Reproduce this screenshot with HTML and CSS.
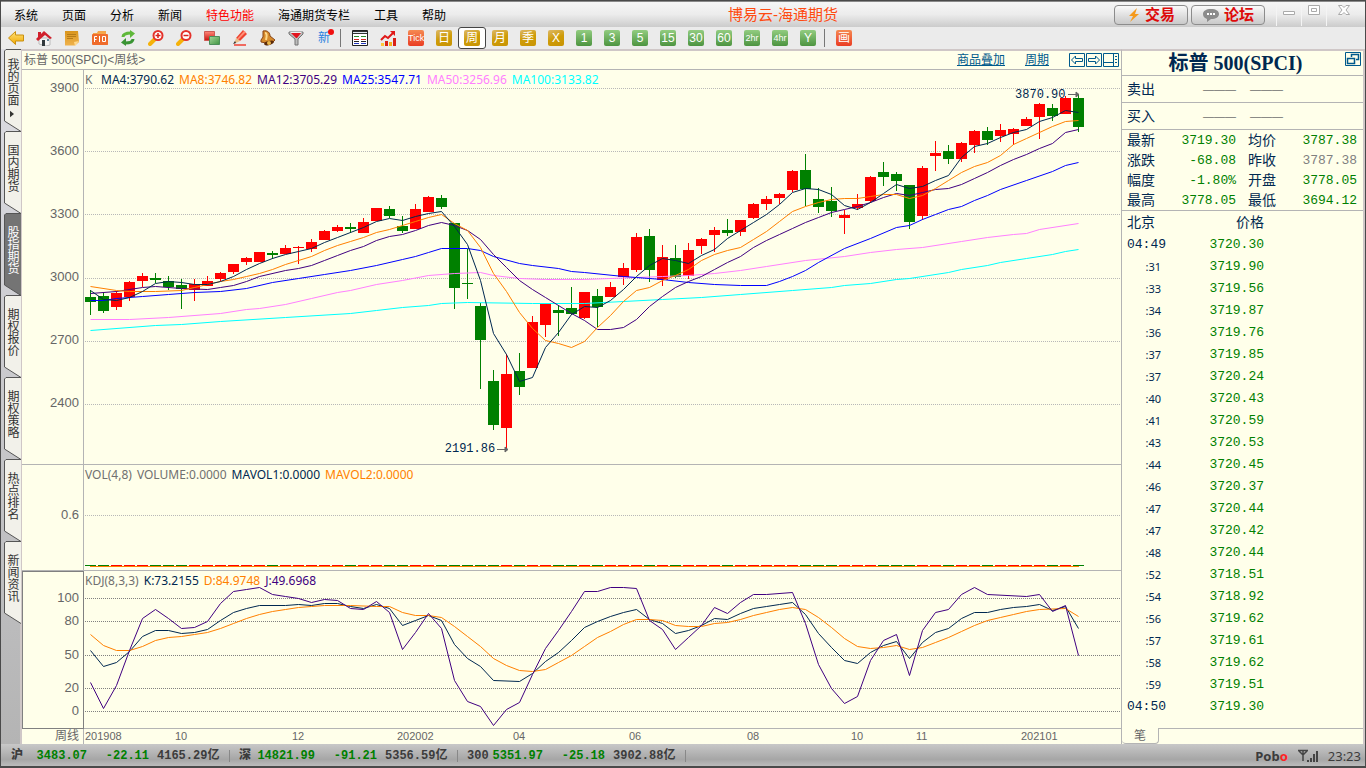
FILE: index.html
```html
<!DOCTYPE html>
<html lang="zh-CN">
<head>
<meta charset="utf-8">
<title>博易云-海通期货</title>
<link rel="stylesheet" href="styles.css">
</head>
<body>
<svg class="defs" aria-hidden="true">
  <defs>
    <linearGradient id="gGold" x1="0" y1="0" x2="0" y2="1"><stop offset="0" stop-color="#ffe27a"/><stop offset="1" stop-color="#f0a800"/></linearGradient>
    <linearGradient id="gNote" x1="0" y1="0" x2="0" y2="1"><stop offset="0" stop-color="#d9951c"/><stop offset="1" stop-color="#efb24c"/></linearGradient>
    <linearGradient id="gRed" x1="0" y1="0" x2="0" y2="1"><stop offset="0" stop-color="#ff8a7a"/><stop offset="1" stop-color="#c9100c"/></linearGradient>
    <linearGradient id="gGreen" x1="0" y1="0" x2="1" y2="1"><stop offset="0" stop-color="#a4d69a"/><stop offset="1" stop-color="#3f9440"/></linearGradient>
  </defs>
</svg>
<div class="window">
  <header class="titlebar">
    <nav class="menu">
      <button>系统</button><button>页面</button><button>分析</button><button>新闻</button><button class="hot">特色功能</button><button>海通期货专栏</button><button>工具</button><button>帮助</button>
    </nav>
    <h1 class="app-title">博易云-海通期货</h1>
    <div class="title-actions">
      <button class="pill"><svg width="14" height="16" viewBox="0 0 14 16"><path d="M10 1 2 9h4l-3 6 9-8H8z" fill="#f59a1c"/></svg>交易</button>
      <button class="pill"><svg width="18" height="16" viewBox="0 0 18 16"><path d="M9 2c5 0 8 2 8 5s-3 5-8 5l-4 3v-3c-3-1-4-3-4-5 0-3 3-5 8-5z" fill="#8c8c8c"/><path d="M5 6h2v2H5zM8 6h2v2H8zM11 6h2v2h-2z" fill="#fff"/></svg>论坛</button>
    </div>
    <div class="win-controls">
      <button aria-label="最小化"><svg width="14" height="12" viewBox="0 0 14 12"><path d="M1.500 7.500h11v3h-11z" fill="#fff" stroke="#aaa"/></svg></button>
      <button aria-label="最大化"><svg width="14" height="12" viewBox="0 0 14 12"><path d="M1.500 1.500h11v9h-11zM4.500 4.500h5v3h-5z" fill="#fff" stroke="#aaa"/></svg></button>
      <button class="close" aria-label="关闭"><svg width="14" height="12" viewBox="0 0 14 12"><path d="M1.500 1.500h3.500l2 2 2-2h3.500L9 6l3.500 4.500H9l-2-2-2 2H1.500L5 6z" fill="#fff" stroke="#aaa"/></svg></button>
    </div>
  </header>

  <div class="toolbar">
    <button class="tool" aria-label="后退"><svg width="16" height="16" viewBox="0 0 16 16"><path d="M.5 8 7.500 1.500V5h8v6h-8v3.500z" fill="url(#gGold)" stroke="#c99010"/></svg></button>
    <button class="tool" aria-label="首页"><svg width="16" height="16" viewBox="0 0 16 16"><path d="M3 8h11v7l-4 1-7-2z" fill="#f4f4f4" stroke="#bbb"/><path d="M8 1 16 8l-2 1-5-4-7 6-2-2zM2 2h3v3L2 7z" fill="#d0202c"/><path d="M6 10h3v6H6z" fill="#30383c"/><path d="M11 9h2v2h-2z" fill="#64879c"/></svg></button>
    <button class="tool" aria-label="便签"><svg width="16" height="16" viewBox="0 0 16 16"><path d="M1 1h13l1 11-4 3.500H1z" fill="url(#gNote)"/><path d="M3 4.500h9M3 6.500h9M3 8.500h6" stroke="#b67c18"/><path d="m15 11-5 1 1 4z" fill="#ffd98c"/></svg></button>
    <button class="tool" aria-label="F10"><svg width="16" height="16" viewBox="0 0 16 16"><path d="M1 3h4l1-2h8v3h1l1 11H1z" fill="#f5a64a"/><rect y="4" width="16" height="11" rx="1" fill="#ef6c2c"/><path d="M2.500 12V6.500H5M2.500 9.500h2M7.500 6v6M10.500 6.500h3v5h-3z" stroke="#fff" fill="none"/></svg></button>
    <button class="tool" aria-label="刷新"><svg width="16" height="16" viewBox="0 0 16 16"><path d="M3 7c0-3 3-4 8-4" fill="none" stroke="#5fb83a" stroke-width="3"/><path d="M10 0l5 3.500L10 8z" fill="#5fb83a"/><path d="M13 9c0 3-3 4-8 4" fill="none" stroke="#3a9434" stroke-width="3"/><path d="M6 16l-5-3.500L6 8z" fill="#3a9434"/></svg></button>
    <button class="tool" aria-label="放大"><svg width="16" height="16" viewBox="0 0 16 16"><path d="m7 9-5 5" stroke="#f5b20a" stroke-width="4" stroke-linecap="round"/><circle cx="10" cy="5.500" r="4.500" fill="#fff" stroke="#e4322b" stroke-width="2"/><path d="M7.500 5.500h5M10 3v5" stroke="#d8221c" stroke-width="1.500"/></svg></button>
    <button class="tool" aria-label="缩小"><svg width="16" height="16" viewBox="0 0 16 16"><path d="m7 9-5 5" stroke="#f5b20a" stroke-width="4" stroke-linecap="round"/><circle cx="10" cy="5.500" r="4.500" fill="#fff" stroke="#e4322b" stroke-width="2"/><path d="M7.500 5.500h5" stroke="#d8221c" stroke-width="1.500"/></svg></button>
    <button class="tool" aria-label="叠加"><svg width="16" height="16" viewBox="0 0 16 16"><path d="M.5 1.500h10v9H.5z" fill="url(#gRed)" stroke="#cd5a55"/><path d="M5.500 6.500h10v8h-10z" fill="url(#gGreen)" stroke="#4c8e5a"/></svg></button>
    <button class="tool" aria-label="画笔"><svg width="16" height="16" viewBox="0 0 16 16"><path d="M11 0 15 4 8 11 4 8z" fill="#ee4330"/><path d="m12 1 2 1-8 8-1-1z" fill="#ff9178"/><path d="m4 8 4 3-6 3z" fill="#eac18b"/><path d="m1 14 2-3 1 2z" fill="#333"/><path d="M2 15h12" stroke="#f06a60" stroke-width="2"/></svg></button>
    <button class="tool" aria-label="预警"><svg width="16" height="16" viewBox="0 0 16 16"><path d="M3 1c5-1 7 2 7 5l5 4-4 4-10-2v-2l2-3z" fill="#d58a2c" stroke="#894514"/><path d="M5 3c2 0 2 3 1 7" stroke="#ffd98a" stroke-width="2" fill="none"/><ellipse cx="9" cy="13" rx="5" ry="2" fill="#5b2a0a" transform="rotate(-15 9 13)"/><circle cx="9" cy="13" r="2" fill="#e9b648"/></svg></button>
    <button class="tool" aria-label="筛选"><svg width="16" height="16" viewBox="0 0 16 16"><path d="M1 2h14v2l-5 5v6H7V9L1 4z" fill="#bcbcbc" stroke="#747474"/><path d="M3 3h10L9 8H8z" fill="#e2141e"/><path d="M2.500 2.500h11" stroke="#eee"/></svg></button>
    <button class="tool new">新</button>
    <span class="divider"></span>
    <button class="tool" aria-label="报价表"><svg width="16" height="16" viewBox="0 0 16 16"><path d="M.5.500h15v15H.5z" fill="#fff" stroke="#222"/><path d="M1 2.500h14" stroke="#333" stroke-width="3"/><path d="M1 2.500h14" stroke="#dfe6ee"/><path d="M2 6.500h5M9 6.500h5" stroke="#2a8a2a"/><path d="M2 9.500h5M9 9.500h5" stroke="#d22"/><path d="M2 11.500h5M9 11.500h5" stroke="#222"/><path d="M2 13.500h5M9 13.500h5" stroke="#2438c0"/></svg></button>
    <button class="tool" aria-label="分时图"><svg width="16" height="16" viewBox="0 0 16 16"><path d="m1 10 4-4 3 2 6-6" stroke="#e01818" stroke-width="2" fill="none"/><path d="M10 1h5v5z" fill="#e01818"/><path d="M1 13h3v3H1z" fill="#ffc83a"/><path d="M5 11h3v5H5z" fill="#d92018"/><path d="M9 12h3v4H9z" fill="#f6b21c"/><path d="M13 8h3v8h-3z" fill="#d92018"/></svg></button>
    <button class="tool"><span class="badge tick narrow">Tick</span></button>
    <button class="tool"><span class="badge gold">日</span></button>
    <button class="tool selected" aria-pressed="true"><span class="badge gold">周</span></button>
    <button class="tool"><span class="badge gold">月</span></button>
    <button class="tool"><span class="badge gold">季</span></button>
    <button class="tool"><span class="badge gold">X</span></button>
    <button class="tool"><span class="badge green">1</span></button>
    <button class="tool"><span class="badge green">3</span></button>
    <button class="tool"><span class="badge green">5</span></button>
    <button class="tool"><span class="badge green">15</span></button>
    <button class="tool"><span class="badge green">30</span></button>
    <button class="tool"><span class="badge green">60</span></button>
    <button class="tool"><span class="badge green narrow">2hr</span></button>
    <button class="tool"><span class="badge green narrow">4hr</span></button>
    <button class="tool"><span class="badge green">Y</span></button>
    <span class="divider"></span>
    <button class="tool"><span class="badge tick">画</span></button>
  </div>

  <div class="workspace">
    <nav class="side-tabs">
      <button class="side-tab"><svg viewBox="0 0 17 83"><path d="M17 .5H2L.5 2v70L17 82.500"/></svg><span>我的页面</span><svg class="caret" viewBox="0 0 5 8"><path d="M0 0 5 4 0 8z"/></svg></button>
      <button class="side-tab"><svg viewBox="0 0 17 83"><path d="M17 .5H2L.5 2v70L17 82.500"/></svg><span>国内期货</span></button>
      <button class="side-tab active"><svg viewBox="0 0 17 83"><path d="M17 .5H2L.5 2v70L17 82.500"/></svg><span>股指期货</span></button>
      <button class="side-tab"><svg viewBox="0 0 17 83"><path d="M17 .5H2L.5 2v70L17 82.500"/></svg><span>期权报价</span></button>
      <button class="side-tab"><svg viewBox="0 0 17 83"><path d="M17 .5H2L.5 2v70L17 82.500"/></svg><span>期权策略</span></button>
      <button class="side-tab"><svg viewBox="0 0 17 83"><path d="M17 .5H2L.5 2v70L17 82.500"/></svg><span>热点排名</span></button>
      <button class="side-tab"><svg viewBox="0 0 17 83"><path d="M17 .5H2L.5 2v70L17 82.500"/></svg><span>新闻资讯</span></button>
    </nav>

    <main class="chart">
      <div class="chart-head">
        <h2>标普 500(SPCI)&lt;周线&gt;</h2>
        <a href="#overlay">商品叠加</a>
        <a href="#period">周期</a>
        <div class="head-tools">
          <button aria-label="上一个"><svg width="16" height="14" viewBox="0 0 16 14"><path d="M.5.500h15v13H.5z"/><path d="m2.500 7 4-4v2.500h7v3h-7V11z"/></svg></button>
          <button aria-label="下一个"><svg width="16" height="14" viewBox="0 0 16 14"><path d="M.5.500h15v13H.5z"/><path d="m13.500 7-4-4v2.500h-7v3h7V11z"/></svg></button>
          <button aria-label="侧栏"><svg width="16" height="14" viewBox="0 0 16 14"><path d="M.5.500h15v13H.5zM10.500 1v12M1 9.500h9M12 3.500h2M12 6.500h2M12 9.500h2"/></svg></button>
        </div>
      </div>

      <div class="scale scale-price"><span></span><span>3900</span><span>3600</span><span>3300</span><span>3000</span><span>2700</span><span>2400</span></div>
      <section class="plot">
        <svg id="price" viewBox="84 70 1037 394" preserveAspectRatio="none"></svg>
        <p class="legend"><span class="c-gray k-label">K</span><span class="c-navy">MA4:3790.62</span><span class="c-orange">MA8:3746.82</span><span class="c-purple">MA12:3705.29</span><span class="c-blue">MA25:3547.71</span><span class="c-pink">MA50:3256.96</span><span class="c-cyan">MA100:3133.82</span></p>
        <p class="mark mark-high">3870.90<svg width="12" height="7" viewBox="0 0 12 7"><path d="M0 3.500h10M8 1l3 2.500L8 6z"/></svg></p>
        <p class="mark mark-low">2191.86<svg width="12" height="7" viewBox="0 0 12 7"><path d="M0 3.500h10M8 1l3 2.500L8 6z"/></svg></p>
      </section>

      <div class="scale scale-vol"><span></span><span>0.6</span></div>
      <section class="plot">
        <svg id="vol" viewBox="84 465 1037 105" preserveAspectRatio="none"></svg>
        <p class="legend"><span class="c-gray">VOL(4,8)</span><span class="c-gray">VOLUME:0.0000</span><span class="c-navy">MAVOL1:0.0000</span><span class="c-orange">MAVOL2:0.0000</span></p>
      </section>

      <div class="scale scale-kdj"><span></span><span>100</span><span>80</span><span>50</span><span>20</span><span>0</span></div>
      <section class="plot">
        <svg id="kdj" viewBox="84 571 1037 157" preserveAspectRatio="none"></svg>
        <p class="legend"><span class="c-gray">KDJ(8,3,3)</span><span class="c-navy">K:73.2155</span><span class="c-orange">D:84.9748</span><span class="c-purple">J:49.6968</span></p>
      </section>

      <div class="period">周线</div>
      <div class="dates"><span>201908</span><span>10</span><span>12</span><span>202002</span><span>04</span><span>06</span><span>08</span><span>10</span><span>11</span><span>202101</span></div>
    </main>

    <aside class="quote">
      <header class="quote-head"><h2>标普 500(SPCI)</h2><button aria-label="弹出"><svg width="16" height="14" viewBox="0 0 16 14"><path d="M.5.500h15v13H.5z"/><path d="M6.500 5V2.500h7v5H11M2.500 6.500h7v5h-7z" stroke-width="1.500"/></svg></button></header>
      <div class="book"><span>卖出</span><span class="dash">———</span><span class="dash">———</span></div>
      <div class="book"><span>买入</span><span class="dash">———</span><span class="dash">———</span></div>
      <table class="stats">
        <tr><th>最新</th><td>3719.30</td><th>均价</th><td>3787.38</td></tr>
        <tr><th>涨跌</th><td>-68.08</td><th>昨收</th><td class="flat">3787.38</td></tr>
        <tr><th>幅度</th><td>-1.80%</td><th>开盘</th><td>3778.05</td></tr>
        <tr><th>最高</th><td>3778.05</td><th>最低</th><td>3694.12</td></tr>
      </table>
      <div class="tick-area">
      <table class="ticks">
        <thead><tr><th>北京</th><th>价格</th></tr></thead>
        <tbody>
        <tr><td class="full">04:49</td><td>3720.30</td></tr>
        <tr><td>:31</td><td>3719.90</td></tr>
        <tr><td>:33</td><td>3719.56</td></tr>
        <tr><td>:34</td><td>3719.87</td></tr>
        <tr><td>:36</td><td>3719.76</td></tr>
        <tr><td>:37</td><td>3719.85</td></tr>
        <tr><td>:37</td><td>3720.24</td></tr>
        <tr><td>:40</td><td>3720.43</td></tr>
        <tr><td>:41</td><td>3720.59</td></tr>
        <tr><td>:43</td><td>3720.53</td></tr>
        <tr><td>:44</td><td>3720.45</td></tr>
        <tr><td>:46</td><td>3720.37</td></tr>
        <tr><td>:47</td><td>3720.44</td></tr>
        <tr><td>:47</td><td>3720.42</td></tr>
        <tr><td>:48</td><td>3720.44</td></tr>
        <tr><td>:52</td><td>3718.51</td></tr>
        <tr><td>:54</td><td>3718.92</td></tr>
        <tr><td>:56</td><td>3719.62</td></tr>
        <tr><td>:57</td><td>3719.61</td></tr>
        <tr><td>:58</td><td>3719.62</td></tr>
        <tr><td>:59</td><td>3719.51</td></tr>
        <tr><td class="full">04:50</td><td>3719.30</td></tr>
        </tbody>
      </table>
      </div>
      <div class="quote-tabs"><button>笔</button><span></span></div>
    </aside>
  </div>

  <footer class="status">
    <div class="index"><b>沪</b><span class="down">3483.07</span><span class="down">-22.11</span><span class="amount">4165.29亿</span></div>
    <div class="index"><b>深</b><span class="down">14821.99</span><span class="down">-91.21</span><span class="amount">5356.59亿</span></div>
    <div class="index"><b>300</b><span class="down">5351.97</span><span class="down">-25.18</span><span class="amount">3902.88亿</span></div>
    <div class="tray"><span class="brand">Pob<i>o</i></span><svg width="22" height="14" viewBox="0 0 22 14"><path d="M1 1.500h10M2 2l4 4 4-4M6 1v11" fill="none" stroke="#444" stroke-width="1.500"/><path d="M10 11h2v2h-2zM13 9h2v4h-2zM16 5h2v8h-2zM19 2h2v11h-2z" fill="#444"/></svg><time>23:23</time></div>
  </footer>
</div>
<script src="chart.js"></script>
</body>
</html>
```

FILE: styles.css
```css
* { box-sizing: border-box; }
body, h1, h2, p { margin: 0; font-weight: normal; }
body {
  height: 100vh;
  overflow: hidden;
  font: 12px/16px "Liberation Sans", "Noto Sans CJK SC", sans-serif;
  color: #002850;
}
button {
  font: inherit;
  color: inherit;
  background: none;
  border: 0;
  padding: 0;
}
svg { display: block; }
.defs { position: absolute; width: 0; height: 0; }

.window {
  height: 100%;
  display: flex;
  flex-direction: column;
  background: #ebebeb;
  border: 1px solid #4a4a4a;
  border-bottom-width: 2px;
}

/* title bar */
.titlebar {
  display: flex;
  align-items: center;
  height: 26px;
  padding: 0 4px 0 13px;
  border-top: 1px solid #8a8a8a;
  background: linear-gradient(#f6f6f6, #ececec 50%, #cbcbcb);
}
.menu { display: flex; gap: 24px; color: #000; padding-top: 2px; }
.menu .hot { color: #f00; }
.app-title { flex: 1; text-align: center; font-size: 15px; color: #ff4a10; padding-left: 6px; }
.title-actions { display: flex; gap: 3px; }
.pill {
  display: flex;
  align-items: center;
  justify-content: center;
  gap: 4px;
  width: 74px;
  height: 20px;
  border: 1px solid #8c8c8c;
  border-radius: 4px;
  background: linear-gradient(#fafafa, #dcdcdc 60%, #cacaca);
  font-size: 15px;
  font-weight: bold;
  color: #de0a0a;
}
.win-controls { display: flex; padding-left: 11px; }
.win-controls button {
  display: flex;
  justify-content: center;
  align-items: flex-start;
  width: 25px;
  height: 22px;
  border-left: 1px solid #f4f4f4;
}
.win-controls .close { width: 35px; }

/* toolbar */
.toolbar { display: flex; align-items: center; height: 22px; padding-left: 1px; }
.tool {
  display: flex;
  align-items: center;
  justify-content: center;
  width: 28px;
  height: 22px;
}
.tool.selected { border: 1px solid #444; border-radius: 3px; background: #fff; }
.tool.new { position: relative; color: #2c82e0; font-size: 12px; }
.tool.new::after {
  content: "";
  position: absolute;
  top: 2px;
  right: 4px;
  width: 6px;
  height: 6px;
  border-radius: 50%;
  background: #f01010;
}
.divider { width: 6px; height: 18px; border-left: 1px solid #777; margin-left: 2px; }
.badge {
  width: 16px;
  height: 16px;
  border-radius: 2px;
  color: #fff;
  font-size: 12px;
  line-height: 16px;
  text-align: center;
}
.badge.gold { background: linear-gradient(160deg, #dcb868, #cf9c08 50%, #c89404); }
.badge.green { background: linear-gradient(#92cc80, #4d9440); }
.badge.tick { background: linear-gradient(#f58a52, #ea3c22); }
.badge.narrow { font-size: 9px; white-space: nowrap; }

/* workspace */
.workspace {
  flex: 1;
  min-height: 0;
  display: grid;
  grid-template-columns: 19px minmax(0, 1fr) 244px;
  background: linear-gradient(#dedee4, #b4b4b4);
}
.side-tabs { display: flex; flex-direction: column; padding-left: 3px; }
.side-tab {
  position: relative;
  display: flex;
  flex-direction: column;
  align-items: center;
  height: 82px;
  padding-top: 9px;
  color: #333;
}
.side-tab > svg:first-child {
  position: absolute;
  inset: 0 auto auto 0;
  width: 17px;
  height: 83px;
  fill: #f2f1ea;
  stroke: #555;
}
.side-tab span {
  position: relative;
  writing-mode: vertical-rl;
  font-size: 12px;
  line-height: 14px;
}
.side-tab:not(:first-child) span { padding-top: 4px; }
.side-tab .caret { position: relative; width: 4px; height: 8px; margin-top: 4px; fill: #333; }
.side-tab.active { color: #fff; }
.side-tab.active > svg:first-child { fill: #747474; }

.chart {
  display: grid;
  grid-template-columns: 62px minmax(0, 1fr);
  grid-template-rows: 19px minmax(0, 395fr) minmax(0, 106fr) minmax(0, 158fr) 15px;
  background: #ffffea;
  border: solid #cfc7c7;
  border-width: 2px 0 0 2px;
}
.chart-head {
  grid-column: 1 / -1;
  display: flex;
  align-items: center;
  gap: 20px;
  padding: 0 2px;
  border-bottom: 1px solid #b4b4b4;
}
.chart-head h2 { flex: 1; font-size: 12px; color: #666; }
.chart-head a { color: #005a8c; }
.head-tools { display: flex; gap: 1px; }
.head-tools svg, .quote-head svg { fill: none; stroke: #005a8c; }

.scale {
  display: grid;
  border: solid #b4b4b4;
  border-width: 0 1px 1px 0;
  padding-right: 4px;
  text-align: right;
  font-size: 13px;
  line-height: 14px;
  color: #666;
}
.scale-price { grid-template-rows: 11fr repeat(5, 63fr) 68fr; }
.scale-vol { grid-template-rows: 43fr 62fr; }
.scale-kdj {
  grid-template-rows: 20fr 23fr 34fr 33fr 23fr 24fr;
  border-color: #808080;
  box-shadow: inset 1px 1px #808080;
}
.plot { position: relative; min-height: 0; border-bottom: 1px solid #b4b4b4; }
.plot > svg { width: 100%; height: 100%; }
.legend {
  position: absolute;
  top: 1px;
  left: 1px;
  display: flex;
  gap: 5px;
  font: 12px/18px "Noto Sans", sans-serif;
  white-space: nowrap;
}
.k-label { width: 11px; }
.c-gray { color: #707070; }
.c-navy { color: #002850; }
.c-orange { color: #ff8000; }
.c-purple { color: #400080; }
.c-blue { color: #00f; }
.c-pink { color: #ff80ff; }
.c-cyan { color: #0ff; }
.mark {
  position: absolute;
  display: flex;
  align-items: center;
  gap: 2px;
  font: 12px/14px "Liberation Mono", monospace;
}
.mark path { fill: #666; stroke: #666; }
.mark-high { top: 4.5%; right: 4%; }
.mark-low { top: 94.5%; right: 59%; }

.period {
  border-right: 1px solid #b4b4b4;
  padding-right: 4px;
  text-align: right;
  line-height: 15px;
  color: #666;
}
.dates {
  display: grid;
  grid-template-columns: 90fr 117fr 105fr 116fr 116fr 118fr 104fr 65fr 105fr 100fr;
  padding-left: 1px;
  font-size: 11px;
  line-height: 15px;
  color: #666;
}

/* chart series */
.grid { stroke: #b8b8b8; stroke-dasharray: 1 1; }
.grid.dark { stroke: #808080; }
.up { fill: #f00; }
.fall { fill: #008000; }
.line { fill: none; stroke: currentColor; }

/* quote panel */
.quote {
  display: flex;
  flex-direction: column;
  min-height: 0;
  background: #ffffea;
  border: solid #cfc7c7;
  border-width: 2px 2px 0 1px;
  border-left-color: #b4b4b4;
}
.quote-head {
  position: relative;
  height: 25px;
  border-bottom: 1px solid #b4b4b4;
  text-align: center;
}
.quote-head h2 {
  padding-right: 14px;
  font: bold 20px/24px "Liberation Serif", "Noto Sans CJK SC", serif;
}
.quote-head button { position: absolute; top: 1px; right: 2px; }
.book {
  display: grid;
  grid-template-columns: 76px 47px 1fr;
  align-items: center;
  height: 27px;
  padding-left: 5px;
  border-bottom: 1px solid #b4b4b4;
  font-size: 14px;
}
.book .dash { font-size: 11px; color: #707070; }
table { border-collapse: collapse; }
th, td { padding: 0; font-weight: normal; font-size: 14px; }
td { font: 13px "Liberation Mono", monospace; color: #008000; }
.stats { width: 100%; table-layout: fixed; border-bottom: 1px solid #b4b4b4; }
.stats tr { height: 20px; }
.stats th { width: 42px; padding-left: 5px; text-align: left; line-height: 20px; }
.stats td { text-align: right; }
.stats td:nth-child(2) { width: 76px; padding-right: 4px; }
.stats th:nth-child(3) { padding-left: 8px; }
.stats td:last-child { padding-right: 6px; }
.stats .flat { color: #808080; }
.tick-area { flex: 1; min-height: 0; overflow: hidden; }
.ticks { width: 142px; }
.ticks tr { height: 22px; }
.ticks th { line-height: 22px; }
.ticks th:first-child { width: 60px; padding-left: 5px; text-align: left; }
.ticks th:last-child, .ticks td:last-child { text-align: right; }
.ticks td:first-child {
  padding-right: 21px;
  text-align: right;
  font: 11px "Noto Sans", sans-serif;
  color: #002850;
}
.ticks td.full:first-child { padding: 0 0 0 5px; text-align: left; font: 13px "Liberation Mono", monospace; }
.quote-tabs { display: flex; height: 16px; }
.quote-tabs button {
  width: 37px;
  border: solid #b4b4b4;
  border-width: 0 1px 1px 0;
  border-radius: 0 0 4px 4px;
  line-height: 14px;
  color: #666;
}
.quote-tabs span { flex: 1; border-top: 1px solid #b4b4b4; }

/* status bar */
.status {
  display: flex;
  align-items: center;
  height: 22px;
  padding: 2px 4px 0 10px;
  background: linear-gradient(#c8c8c8, #a6a6a6 70%, #bcbcbc);
  font: bold 12px/16px "Liberation Mono", "Noto Sans CJK SC", monospace;
  color: #3c3c3c;
}
.index {
  display: grid;
  grid-template-columns: auto 1fr 62px 80px;
  width: 219px;
  margin-right: 9px;
  border-right: 1px solid #888;
  line-height: 12px;
}
.index .down { text-align: right; color: #008000; }
.index .amount { padding-left: 8px; }
.tray {
  flex: 1;
  display: flex;
  align-items: center;
  justify-content: flex-end;
  gap: 9px;
  font-family: "Noto Sans", sans-serif;
  font-size: 13px;
}
.tray i { font-style: normal; color: #f22; }
.tray time { font-weight: normal; }
```

FILE: chart.js
```js
const STEP = 13;
const FIRST = 90;

// open/close top, bottom, high, low, direction
const candles = `297 302 290 315 g;296 311 292 313 g;293 307 291 310 r;282 297 281 301 r;276 281 273 287 r;278 280 273 283 g;281 287 276 290 g;285 289 279 309 g;284 290 279 301 r;281 286 276 286 r;273 279 272 281 r;264 272 264 274 r;258 262 257 265 r;252 262 252 262 r;253 255 251 259 g;248 254 245 254 r;247 248 246 264 r;242 249 239 252 r;231 240 230 240 r;227 231 225 232 r;227 229 223 233 g;222 233 218 233 r;208 221 208 221 r;209 216 206 218 g;226 231 216 233 g;209 229 204 229 r;197 212 196 212 r;198 207 195 209 g;223 288 223 309 g;283 284 249 299 g;306 340 303 389 g;381 425 370 430 g;374 428 354 449 r;371 387 353 395 g;322 368 316 368 r;304 325 304 337 r;310 313 305 336 g;308 314 287 315 g;292 318 292 319 r;296 307 289 327 g;287 297 282 297 r;268 277 263 285 r;237 270 233 272 r;236 270 229 282 g;257 280 245 286 r;258 277 245 278 g;250 276 243 279 r;239 246 238 254 r;230 235 227 252 r;230 233 219 236 g;220 232 220 236 r;204 218 203 219 r;199 204 196 210 r;194 198 193 204 r;171 190 170 192 r;170 189 154 206 g;199 207 188 213 g;201 211 187 217 g;215 218 210 234 r;204 208 194 210 r;177 201 176 203 r;172 177 162 186 g;174 181 172 191 g;185 222 185 229 g;168 216 166 220 r;153 156 141 171 r;151 159 145 164 g;143 159 142 162 r;131 145 130 153 r;131 140 127 145 g;130 136 124 142 r;129 134 128 145 r;119 126 117 126 r;104 117 103 139 r;108 116 104 121 g;98 114 96 114 r;98 127 94 132 g`
  .split(";").map(row => row.split(" "));

// each point is "index:y"
const priceLines = {
  "c-cyan": "0:330 5:325 7:324 10:321 15:317 20:313 22:310 24:307 26:305 27:303 29:302 34:303 38:303 41:301 44:299 47:297 50:294 54:290 57:287 58:285 60:283 62:279 63:278 66:272 67:269 69:265 70:262 72:258 74:254 75:251 76:249",
  "c-pink": "0:319 3:319 6:317 10:313 12:309 13:308 15:304 17:298 19:292 20:290 22:284 24:280 26:275 28:273 30:272 31:275 33:278 35:279 38:279 42:277 44:276 46:275 48:273 50:270 52:266 55:260 58:256 60:252 62:249 64:247 67:241 69:237 71:234 72:233 73:229 76:223",
  "c-blue": "0:300 1:300 2:298 3:297 4:296 6:294 8:292 10:291 12:288 14:282 16:278 18:274 20:270 22:265 24:259 25:256 26:252 27:248 29:248 30:250 31:256 33:263 34:265 36:268 37:271 38:272 41:276 42:277 44:279 46:282 48:284 50:285 52:285 53:281 54:276 55:270 56:262 58:248 60:238 62:227 63:225 64:219 65:214 66:209 67:206 68:200 69:195 70:189 72:180 74:171 75:165 76:162",
  "c-purple": "0:293 2:291 4:287 5:286 7:288 9:289 10:287 11:285 12:281 13:276 15:270 16:268 17:265 18:260 19:255 20:250 21:246 22:240 23:236 24:234 25:230 26:225 27:222 28:225 29:230 30:239 31:254 32:267 33:280 34:289 35:297 36:305 37:313 38:320 39:329 40:329 41:327 42:319 43:306 44:296 45:287 46:281 47:276 48:269 49:262 50:256 51:247 52:240 53:234 54:228 55:222 56:217 57:212 58:209 59:206 60:202 61:197 62:193 63:195 64:192 65:189 66:188 67:184 68:178 69:172 70:165 71:159 72:154 73:148 74:143 75:132 76:129",
  "c-orange": "0:286 2:290 3:291 5:291 7:290 8:287 9:284 10:281 11:279 12:276 13:273 14:269 15:264 16:260 17:256 18:250 19:245 20:241 21:237 22:232 23:229 24:225 25:221 26:217 27:214 28:223 29:230 30:247 31:273 32:291 33:312 34:328 35:340 36:343 37:347 38:341 39:327 40:315 41:301 42:290 43:287 44:280 45:275 46:269 47:260 48:254 49:250 50:247 51:239 52:231 53:221 54:211 55:206 56:202 57:199 58:198 59:198 60:196 61:194 62:194 63:198 64:195 65:188 66:180 67:172 68:166 69:162 70:155 71:144 72:138 73:132 74:126 75:121 76:120",
  "c-navy": "0:290 1:299 2:300 3:297 4:291 5:283 6:281 7:282 8:284 9:284 10:281 11:276 12:269 13:263 14:258 15:254 16:251 17:248 18:242 19:237 20:232 21:227 22:221 23:218 24:220 25:216 26:213 27:211 28:226 29:244 30:280 31:333 32:354 33:381 34:377 35:347 36:332 37:314 38:306 39:307 40:300 41:289 42:276 43:265 44:258 45:260 46:263 47:255 48:249 49:238 50:230 51:222 52:214 53:204 54:192 55:188 56:189 57:194 58:205 59:209 60:202 61:193 62:184 63:188 64:186 65:180 66:175 67:157 68:146 69:143 70:137 71:132 72:129 73:121 74:117 75:110 76:112"
};
const kdjLines = {
  "c-navy": "0:650 1:666 2:662 3:651 4:636 5:630 6:630 7:633 8:632 9:629 10:620 11:612 12:608 13:605 15:605 16:604 17:605 18:603 19:603 20:606 21:608 22:604 23:608 24:625 25:620 26:615 27:620 28:644 29:658 30:666 31:680 33:681 34:673 35:661 36:652 37:640 38:627 39:621 40:616 41:612 42:609 43:619 44:623 45:633 46:630 47:625 48:618 49:619 50:613 51:608 52:606 53:604 54:602 55:614 56:633 57:647 58:660 59:663 60:652 61:645 62:641 63:658 64:642 65:632 66:628 67:618 68:612 69:612 70:609 71:607 72:606 73:604 74:610 75:606 76:628",
  "c-orange": "0:634 1:645 2:650 3:650 4:646 5:640 6:637 7:636 8:634 9:632 10:628 11:623 12:618 13:614 14:611 15:609 16:607 17:606 18:605 20:605 22:606 23:606 24:612 25:615 26:615 27:617 28:626 29:636 30:646 31:658 32:665 33:670 34:671 35:669 36:662 37:655 38:646 39:637 40:631 41:624 42:619 43:619 44:620 45:625 46:626 47:626 48:623 49:622 50:619 51:615 52:612 53:609 54:607 55:609 56:617 57:627 58:638 59:646 60:648 61:647 62:645 63:649 64:647 65:642 66:637 67:631 68:625 69:620 70:617 71:614 72:611 73:609 75:608 76:616",
  "c-purple": "0:682 1:708 2:685 3:650 4:618 5:609 6:618 7:628 8:627 9:621 10:603 11:591 12:589 13:587 14:594 15:596 16:598 17:602 18:599 19:600 20:608 21:609 22:601 23:612 24:649 25:632 26:613 27:628 28:680 29:701 30:706 31:725 32:709 33:702 34:674 35:648 36:630 37:611 38:591 39:591 40:587 41:587 42:588 43:620 44:629 45:649 46:637 47:625 48:607 49:613 50:602 51:594 52:594 54:592 55:623 56:664 57:688 58:703 59:696 60:660 61:640 62:634 63:675 64:630 65:612 66:609 67:594 68:587 69:594 72:596 73:594 74:611 75:605 76:655"
};

const grid = (ys, cls = "") => ys.map(y => `<path class="grid ${cls}" d="M85 ${y + 0.5}H1121"/>`).join("");
const lines = series => Object.entries(series).map(([cls, points]) => {
  const d = points.split(" ").map(p => {
    const [i, y] = p.split(":").map(Number);
    return `${FIRST + STEP * i + 0.5},${y + 0.5}`;
  }).join(" ");
  return `<polyline class="line ${cls}" points="${d}"/>`;
}).join("");

const bars = candles.map(([top, bottom, high, low, dir], i) => {
  const x = FIRST + STEP * i;
  const cls = dir === "r" ? "up" : "fall";
  return `<rect class="${cls}" x="${x}" y="${high}" width="1" height="${low - high}"/>` +
    `<rect class="${cls}" x="${x - 5}" y="${top}" width="11" height="${bottom - top}"/>`;
}).join("");
const volumes = candles.map((c, i) =>
  `<rect class="${c[4] === "r" ? "up" : "fall"}" x="${FIRST + STEP * i - 5}" y="565" width="11" height="1"/>`).join("");

document.getElementById("price").innerHTML = grid([88, 151, 214, 278, 341, 404]) + bars + lines(priceLines);
document.getElementById("vol").innerHTML = grid([515]) + volumes + `<path class="line c-orange" d="M90 566.500H1079"/>`;
document.getElementById("kdj").innerHTML = grid([598, 621, 655, 688, 711], "dark") + lines(kdjLines);
```
